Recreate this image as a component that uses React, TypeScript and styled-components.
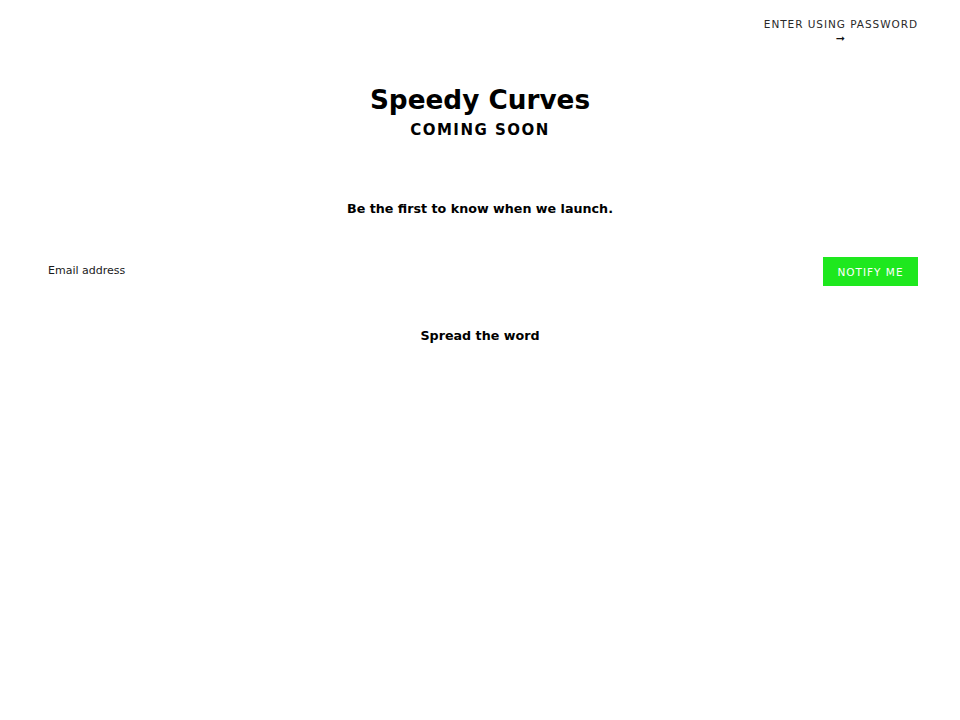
import React from "react"
import styled, { createGlobalStyle } from "styled-components"

const GlobalStyle = createGlobalStyle`
  html, body {
    margin: 0;
    padding: 0;
    background: #ffffff;
    font-family: "DejaVu Sans", Verdana, sans-serif;
    color: #000000;
  }
`

const Page = styled.div`
  display: flex;
  flex-direction: column;
  min-height: 720px;
  padding: 0 42px;
`

const TopBar = styled.header`
  display: flex;
  justify-content: flex-end;
  padding-top: 17px;
`

const PasswordLink = styled.a`
  display: flex;
  flex-direction: column;
  align-items: center;
  gap: 1px;
  font-size: 10.5px;
  font-weight: 500;
  letter-spacing: 0.95px;
  text-transform: uppercase;
  color: #2a2a2a;
  text-decoration: none;
  line-height: 15px;
  cursor: pointer;
`

const Arrow = styled.span`
  font-size: 11px;
  line-height: 12px;
  font-weight: bold;
  color: #111111;
`

const Header = styled.div`
  display: flex;
  flex-direction: column;
  align-items: center;
  margin-top: 38px;
`

const Title = styled.h1`
  margin: 0;
  font-size: 26.3px;
  font-weight: bold;
  line-height: 34px;
`

const Subtitle = styled.h2`
  margin: 2px 0 0;
  font-size: 15px;
  font-weight: bold;
  letter-spacing: 1.5px;
  text-transform: uppercase;
  line-height: 22px;
`

const Lead = styled.p`
  margin: 60px 0 0;
  text-align: center;
  font-size: 12.7px;
  font-weight: bold;
`

const Form = styled.form`
  display: flex;
  align-items: center;
  gap: 4px;
  margin-top: 40px;
`

const EmailInput = styled.input`
  flex: 1;
  border: none;
  outline: none;
  padding: 0 0 2px 6px;
  height: 29px;
  font-family: "DejaVu Sans", Verdana, sans-serif;
  font-size: 11px;
  color: #111111;
  background: transparent;
  &::placeholder {
    color: #1a1a1a;
  }
`

const NotifyButton = styled.button`
  height: 29px;
  width: 95px;
  border: none;
  background: #1ee81e;
  color: #ffffff;
  font-family: "DejaVu Sans", Verdana, sans-serif;
  font-size: 10.5px;
  font-weight: 500;
  letter-spacing: 1px;
  text-transform: uppercase;
  cursor: pointer;
`

const Share = styled.p`
  margin: 41px 0 0;
  text-align: center;
  font-size: 12.7px;
  font-weight: bold;
`

export default function App() {
  return (
    <>
      <GlobalStyle />
      <Page>
        <TopBar>
          <PasswordLink>
            Enter using password
            <Arrow>➞</Arrow>
          </PasswordLink>
        </TopBar>
        <Header>
          <Title>Speedy Curves</Title>
          <Subtitle>Coming Soon</Subtitle>
        </Header>
        <Lead>Be the first to know when we launch.</Lead>
        <Form onSubmit={(e) => e.preventDefault()}>
          <EmailInput type="email" placeholder="Email address" />
          <NotifyButton type="submit">Notify me</NotifyButton>
        </Form>
        <Share>Spread the word</Share>
      </Page>
    </>
  )
}
